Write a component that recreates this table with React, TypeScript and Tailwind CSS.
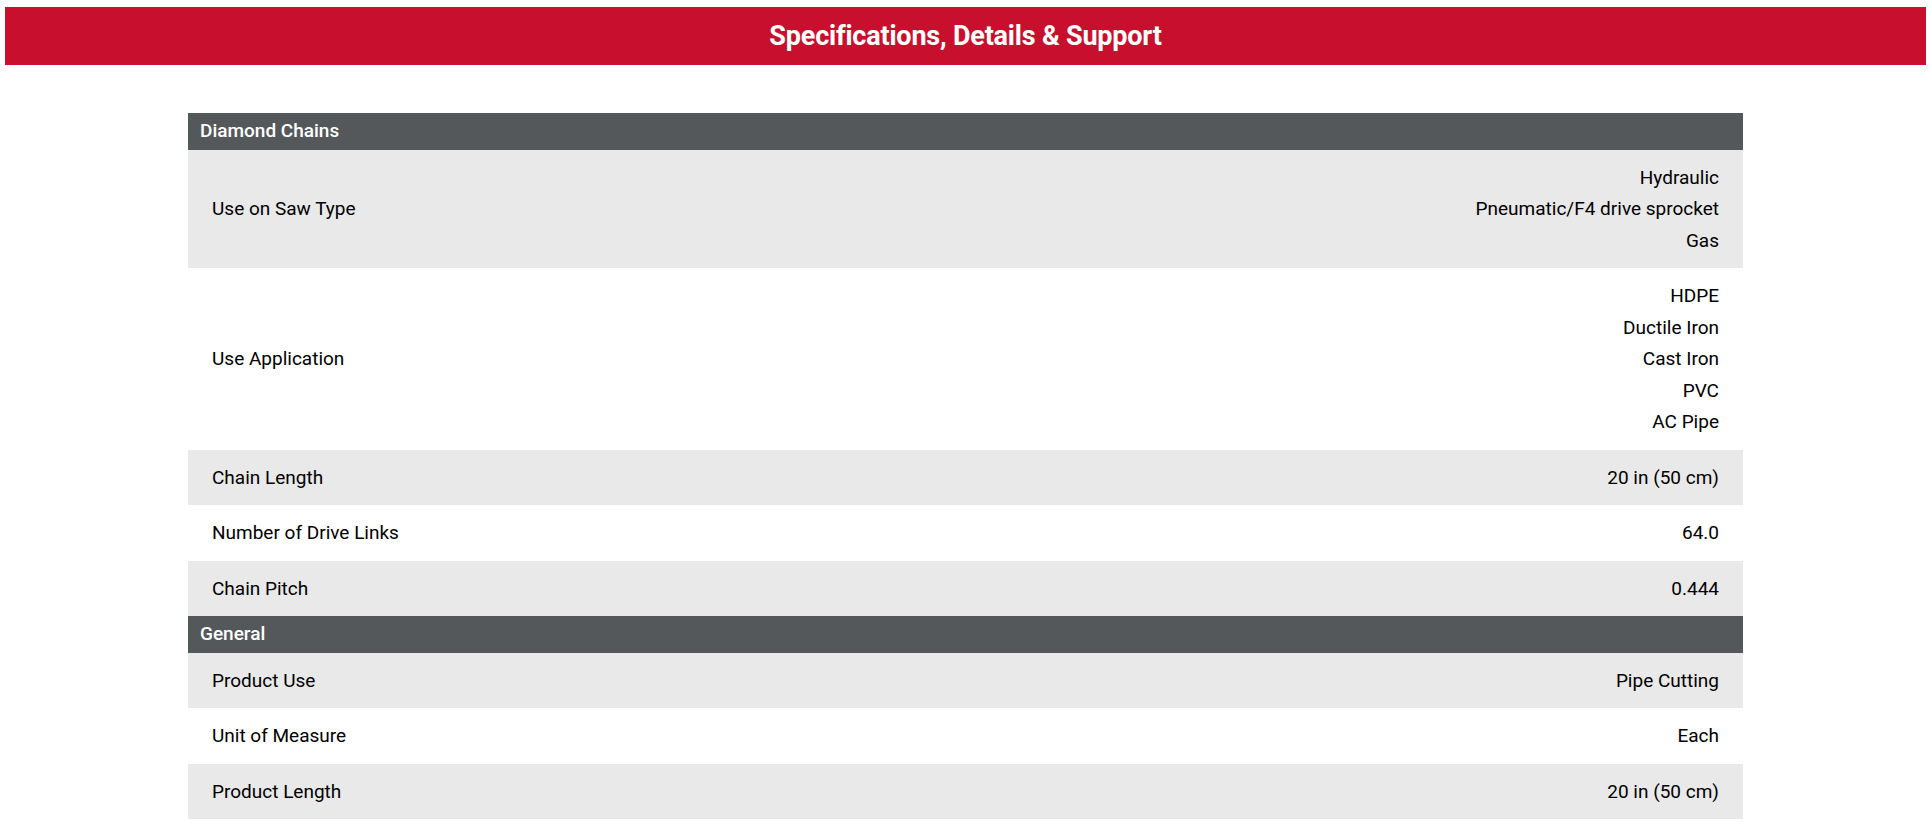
type SpecRow = {
  label: string;
  values: string[];
};

type SpecGroup = {
  title: string;
  rows: SpecRow[];
};

const GROUPS: SpecGroup[] = [
  {
    title: "Diamond Chains",
    rows: [
      { label: "Use on Saw Type", values: ["Hydraulic", "Pneumatic/F4 drive sprocket", "Gas"] },
      { label: "Use Application", values: ["HDPE", "Ductile Iron", "Cast Iron", "PVC", "AC Pipe"] },
      { label: "Chain Length", values: ["20 in (50 cm)"] },
      { label: "Number of Drive Links", values: ["64.0"] },
      { label: "Chain Pitch", values: ["0.444"] },
    ],
  },
  {
    title: "General",
    rows: [
      { label: "Product Use", values: ["Pipe Cutting"] },
      { label: "Unit of Measure", values: ["Each"] },
      { label: "Product Length", values: ["20 in (50 cm)"] },
    ],
  },
];

export default function App() {
  return (
    <div className="min-h-screen bg-white pl-[5px] pr-[6px] pt-[7px] font-['Roboto',sans-serif] text-black">
      {/* Section banner */}
      <div className="flex h-[58px] items-center justify-center bg-[#c8102e]">
        <h2 className="text-[27px] font-bold tracking-[-0.2px] text-white">
          Specifications, Details &amp; Support
        </h2>
      </div>

      {/* Spec table */}
      <div className="mx-auto mt-12 w-[1555px]">
        {GROUPS.map((group) => (
          <div key={group.title}>
            <div className="flex h-[36.5px] items-center bg-[#55585b] px-3 text-[19px] font-medium text-white">
              {group.title}
            </div>
            {group.rows.map((row, i) => (
              <div
                key={row.label}
                className={`flex items-center justify-between px-6 py-3 text-[19px] ${
                  i % 2 === 0 ? "bg-[#e9e9e9]" : "bg-white"
                }`}
              >
                <span className="leading-[31.5px]">{row.label}</span>
                <div className="text-right">
                  {row.values.map((v) => (
                    <div key={v} className="leading-[31.5px]">
                      {v}
                    </div>
                  ))}
                </div>
              </div>
            ))}
          </div>
        ))}
      </div>
    </div>
  );
}
